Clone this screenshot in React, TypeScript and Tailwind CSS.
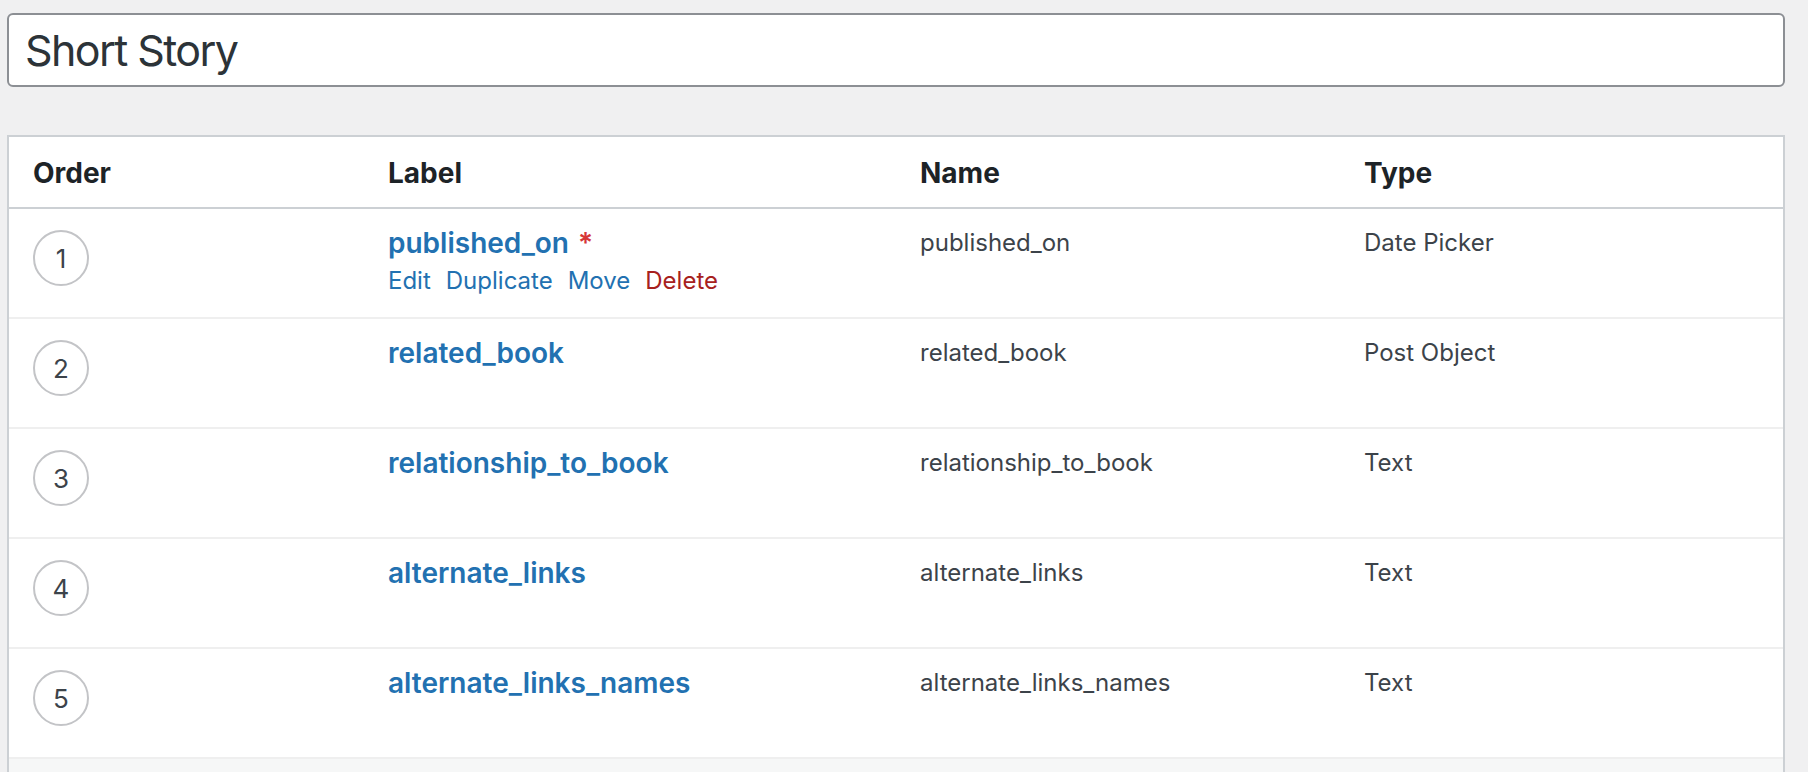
import React from 'react';

type Field = {
  order: number;
  label: string;
  name: string;
  type: string;
  required?: boolean;
  showActions?: boolean;
};

const fields: Field[] = [
  { order: 1, label: 'published_on', name: 'published_on', type: 'Date Picker', required: true, showActions: true },
  { order: 2, label: 'related_book', name: 'related_book', type: 'Post Object' },
  { order: 3, label: 'relationship_to_book', name: 'relationship_to_book', type: 'Text' },
  { order: 4, label: 'alternate_links', name: 'alternate_links', type: 'Text' },
  { order: 5, label: 'alternate_links_names', name: 'alternate_links_names', type: 'Text' },
];

const cols = 'grid grid-cols-[355px_532px_444px_1fr] pl-[24px]';

const FieldRow: React.FC<{ field: Field }> = ({ field }) => (
  <div className={`${cols} h-[110px] border-b-2 border-[#efefef] bg-white`}>
    {/* order */}
    <div className="pt-[21px]">
      <div className="w-[56px] h-[56px] rounded-full border-2 border-[#c3c4c7] flex items-center justify-center text-[26px] text-[#3c434a]">
        {field.order}
      </div>
    </div>

    {/* label + row actions */}
    <div className="pt-[17px]">
      <div className="text-[28px] leading-[34px] font-semibold text-[#2271b1]">
        {field.label}
        {field.required && <span className="ml-[9px] text-[#d63638]">*</span>}
      </div>
      {field.showActions && (
        <div className="mt-[6px] flex gap-[15px] text-[24px] leading-[30px]">
          <a className="text-[#2271b1]">Edit</a>
          <a className="text-[#2271b1]">Duplicate</a>
          <a className="text-[#2271b1]">Move</a>
          <a className="text-[#a7211d]">Delete</a>
        </div>
      )}
    </div>

    <div className="pt-[17px] text-[24px] leading-[34px] text-[#3c434a]">{field.name}</div>
    <div className="pt-[17px] text-[24px] leading-[34px] text-[#3c434a]">{field.type}</div>
  </div>
);

export default function App() {
  return (
    <div className="h-screen overflow-hidden bg-[#f0f0f1] pt-[13px] pl-[7px] pr-[23px] font-['Inter',sans-serif]">
      {/* title */}
      <input
        readOnly
        value="Short Story"
        className="w-full h-[74px] px-[16px] bg-white border-2 border-[#8c8f94] rounded-[6px] text-[43px] tracking-[-1.6px] text-[#2c3338] outline-none"
      />

      {/* field list */}
      <div className="mt-[48px] border-2 border-[#ccd0d4] bg-[#f6f7f7]">
        <div className={`${cols} pt-[19px] pb-[17px] border-b-2 border-[#ccd0d4] bg-white text-[28px] leading-[34px] font-bold text-[#1d2327]`}>
          <div>Order</div>
          <div>Label</div>
          <div>Name</div>
          <div>Type</div>
        </div>
        {fields.map((f) => (
          <FieldRow key={f.order} field={f} />
        ))}
        <div className="h-[80px]" />
      </div>
    </div>
  );
}
